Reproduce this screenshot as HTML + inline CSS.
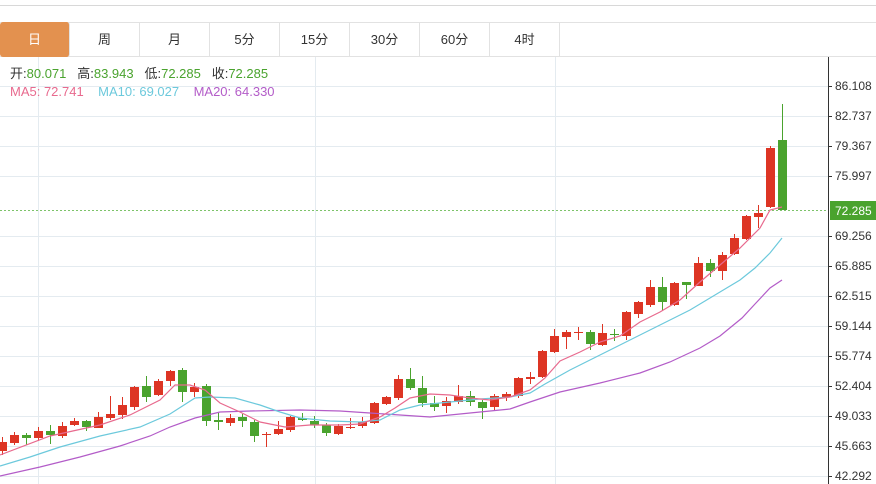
<!DOCTYPE html>
<html><head><meta charset="utf-8"><style>
body{margin:0;width:876px;height:484px;overflow:hidden;background:#fff;font-family:"Liberation Sans","Noto Sans CJK SC",sans-serif;position:relative}
.top{position:absolute;left:0;top:5px;width:876px;height:1px;background:#d8d8d8}
.tabs{position:absolute;left:0;top:22px;height:35px;width:876px;border-top:1px solid #e2e2e2;border-bottom:1px solid #e2e2e2;box-sizing:border-box}
.tab{position:absolute;top:-1px;height:35px;width:70px;box-sizing:border-box;border-right:1px solid #e2e2e2;text-align:center;line-height:35px;font-size:13px;color:#333}
.tab.on{background:#e3914f;color:#fff;border-radius:3px}
.info{position:absolute;left:10px;font-size:13px;white-space:pre;line-height:16px}
.g{color:#4aa32e}.k{color:#333}
.ax{position:absolute;left:835px;font-size:12px;color:#333;line-height:14px}
</style></head><body>
<div class="top"></div>
<svg width="876" height="484" style="position:absolute;left:0;top:0">
<g stroke="#e4ebf0" stroke-width="1">
<line x1="0" y1="86.5" x2="828" y2="86.5"/><line x1="0" y1="116.5" x2="828" y2="116.5"/><line x1="0" y1="146.5" x2="828" y2="146.5"/><line x1="0" y1="176.5" x2="828" y2="176.5"/><line x1="0" y1="236.5" x2="828" y2="236.5"/><line x1="0" y1="266.5" x2="828" y2="266.5"/><line x1="0" y1="296.5" x2="828" y2="296.5"/><line x1="0" y1="326.5" x2="828" y2="326.5"/><line x1="0" y1="356.5" x2="828" y2="356.5"/><line x1="0" y1="386.5" x2="828" y2="386.5"/><line x1="0" y1="416.5" x2="828" y2="416.5"/><line x1="0" y1="446.5" x2="828" y2="446.5"/><line x1="0" y1="476.5" x2="828" y2="476.5"/>
<line x1="38.5" y1="57" x2="38.5" y2="484"/><line x1="315.5" y1="57" x2="315.5" y2="484"/><line x1="555.5" y1="57" x2="555.5" y2="484"/>
</g>
<line x1="828.5" y1="57" x2="828.5" y2="484" stroke="#333"/>
<g stroke="#333"><line x1="828" y1="86.5" x2="832" y2="86.5"/><line x1="828" y1="116.5" x2="832" y2="116.5"/><line x1="828" y1="146.5" x2="832" y2="146.5"/><line x1="828" y1="176.5" x2="832" y2="176.5"/><line x1="828" y1="236.5" x2="832" y2="236.5"/><line x1="828" y1="266.5" x2="832" y2="266.5"/><line x1="828" y1="296.5" x2="832" y2="296.5"/><line x1="828" y1="326.5" x2="832" y2="326.5"/><line x1="828" y1="356.5" x2="832" y2="356.5"/><line x1="828" y1="386.5" x2="832" y2="386.5"/><line x1="828" y1="416.5" x2="832" y2="416.5"/><line x1="828" y1="446.5" x2="832" y2="446.5"/><line x1="828" y1="476.5" x2="832" y2="476.5"/></g>
<line x1="0" y1="210.5" x2="828" y2="210.5" stroke="#7dc36a" stroke-dasharray="2,2"/>
<rect x="830" y="201" width="46" height="19" fill="#4aa32e"/>
<text x="835" y="215" font-size="12" fill="#fff" font-family="Liberation Sans">72.285</text>
<g id="c"></g>
<polyline fill="none" stroke="#b35cc8" stroke-width="1.2" points="0,476 40,467 80,457 120,446 150,436 170,427 195,418 220,412 250,411 300,410 340,411 370,413 400,415 430,417 470,413 510,409 530,402 560,392 600,383 640,373 670,362 700,348 720,336 742,318 755,304 770,288 782,280"/>
<polyline fill="none" stroke="#6cc9dc" stroke-width="1.2" points="0,466 30,457 60,447 100,436 140,427 170,414 195,398 210,397 235,398 260,405 280,412 300,418 330,421 360,422 380,420 400,410 420,405 450,402 480,399 510,397 530,393 545,384 570,370 600,355 630,340 660,325 690,310 720,292 740,280 755,268 770,253 782,238"/>
<polyline fill="none" stroke="#e86a8e" stroke-width="1.2" points="0,455 50,436 100,425 130,415 160,400 175,385 190,385 205,390 220,403 240,412 260,422 285,427 310,425 340,425 360,424 380,417 395,408 410,398 430,394 450,395 470,398 490,400 510,397 530,390 545,378 560,361 580,352 600,342 620,336 640,322 660,312 680,300 700,282 720,265 740,248 760,228 770,210 782,207"/>
</svg>
<script>
var d=[[1,442,451,437,455],[1,435,443,432,445],[0,435,438,433,445],[1,431,438,427,441],[0,431,435,425,444],[1,426,436,422,438],[1,421,425,418,426],[0,421,427,420,431],[1,417,428,412,428],[1,414,418,396,420],[1,405,415,397,419],[1,387,407,386,410],[0,386,397,376,402],[1,381,395,379,396],[1,371,381,370,386],[0,370,392,368,402],[1,387,392,383,397],[0,386,421,384,426],[0,420,422,413,430],[1,418,423,414,426],[0,417,421,414,427],[0,422,436,420,442],[1,434,435,432,447],[1,429,434,421,435],[1,417,430,416,432],[0,418,420,413,421],[0,421,425,416,428],[0,425,433,423,436],[1,426,434,424,435],[1,427,428,418,429],[1,422,426,417,428],[1,403,423,402,424],[1,397,404,396,405],[1,379,398,375,400],[0,379,388,368,390],[0,388,403,376,407],[0,403,407,396,411],[1,401,406,397,413],[1,396,402,385,404],[0,396,402,391,406],[0,402,408,400,419],[1,396,407,394,411],[1,394,397,392,401],[1,378,396,377,398],[1,377,379,372,384],[1,351,377,350,378],[1,336,352,329,353],[1,332,337,330,349],[1,332,333,327,340],[0,332,344,330,350],[1,333,345,324,346],[0,334,335,329,341],[1,312,336,311,340],[1,302,314,301,318],[1,287,305,280,307],[0,287,302,277,311],[1,283,305,282,306],[0,282,285,282,299],[1,263,286,257,286],[0,263,271,259,277],[1,255,271,252,280],[1,238,254,234,255],[1,216,239,215,240],[1,213,217,205,228],[1,148,207,146,208],[0,140,210,104,210]];
var s='';d.forEach(function(c,i){var x=2+12*i,col=c[0]?'#dd3524':'#4aa32e';s+='<line x1="'+(x+.5)+'" y1="'+c[3]+'" x2="'+(x+.5)+'" y2="'+c[4]+'" stroke="'+col+'"/><rect x="'+(x-4)+'" y="'+c[1]+'" width="9" height="'+Math.max(1,c[2]-c[1])+'" fill="'+col+'"/>';});
document.getElementById('c').innerHTML=s;
</script>
<div class="tabs">
<div class="tab on" style="left:0">日</div><div class="tab" style="left:70px">周</div><div class="tab" style="left:140px">月</div><div class="tab" style="left:210px">5分</div><div class="tab" style="left:280px">15分</div><div class="tab" style="left:350px">30分</div><div class="tab" style="left:420px">60分</div><div class="tab" style="left:490px">4时</div>
</div>
<div class="info" style="top:66px"><span class="k">开:</span><span class="g">80.071</span>   <span class="k">高:</span><span class="g">83.943</span>   <span class="k">低:</span><span class="g">72.285</span>   <span class="k">收:</span><span class="g">72.285</span></div>
<div class="info" style="top:84px"><span style="color:#e86a8e">MA5: 72.741</span>    <span style="color:#6cc9dc">MA10: 69.027</span>    <span style="color:#b35cc8">MA20: 64.330</span></div>
<div class="ax" style="top:79px">86.108</div><div class="ax" style="top:109px">82.737</div><div class="ax" style="top:139px">79.367</div><div class="ax" style="top:169px">75.997</div><div class="ax" style="top:229px">69.256</div><div class="ax" style="top:259px">65.885</div><div class="ax" style="top:289px">62.515</div><div class="ax" style="top:319px">59.144</div><div class="ax" style="top:349px">55.774</div><div class="ax" style="top:379px">52.404</div><div class="ax" style="top:409px">49.033</div><div class="ax" style="top:439px">45.663</div><div class="ax" style="top:469px">42.292</div>
</body></html>
